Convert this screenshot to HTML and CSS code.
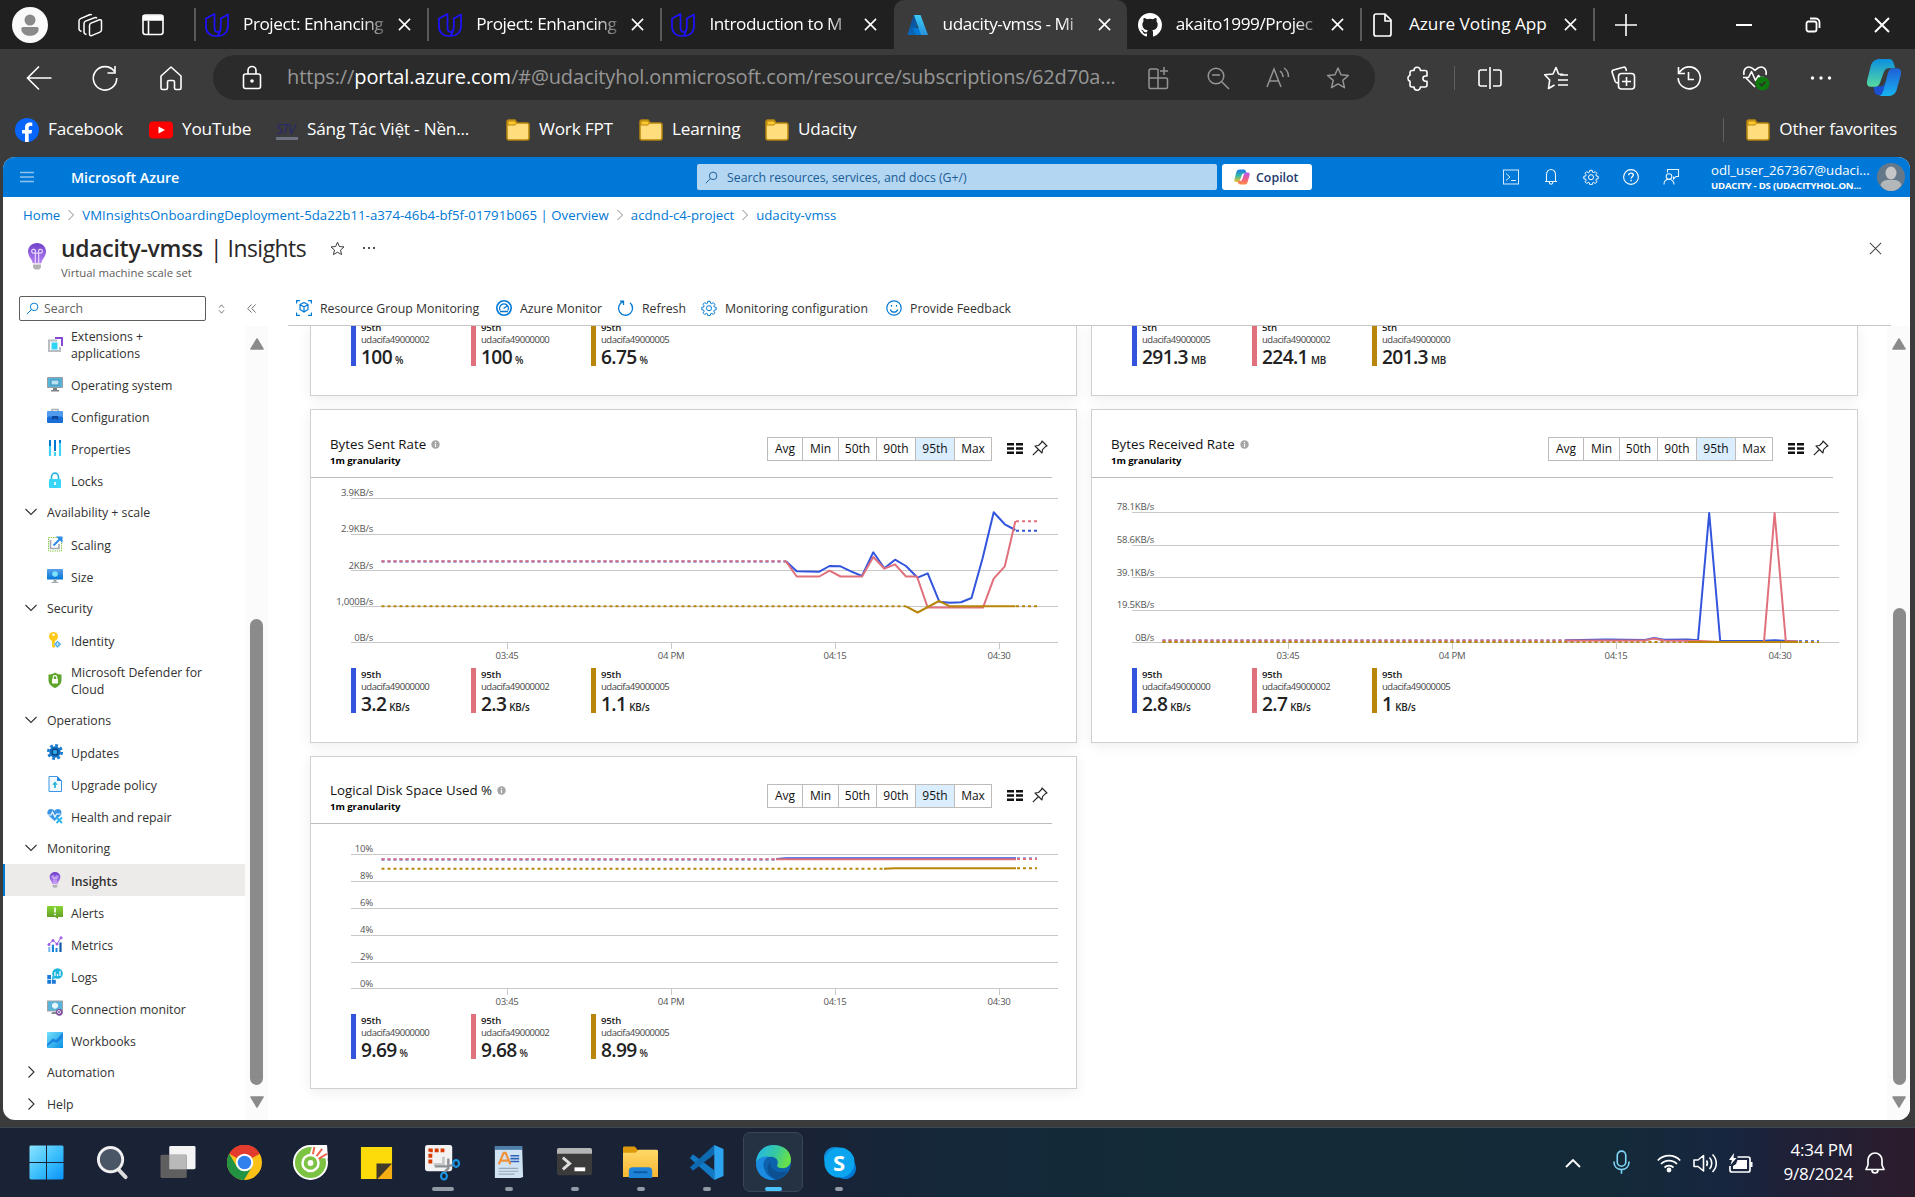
FILE: index.html
```html
<!DOCTYPE html>
<html lang="en">
<head>
<meta charset="utf-8">
<title>udacity-vmss - Microsoft Azure</title>
<link rel="stylesheet" href="styles.css">
</head>
<body>
<svg class="defs" width="0" height="0">
  <defs>
    <linearGradient id="g-az1" x1="0" y1="0" x2="0" y2="1"><stop offset="0" stop-color="#114a8b"/><stop offset="1" stop-color="#0669bc"/></linearGradient>
    <linearGradient id="g-az2" x1="0" y1="0" x2="0" y2="1"><stop offset="0" stop-color="#3ccbf4"/><stop offset="1" stop-color="#2892df"/></linearGradient>
    <linearGradient id="g-bulb" x1="0" y1="0" x2="0" y2="1"><stop offset="0" stop-color="#6f42c9"/><stop offset="1" stop-color="#b580f5"/></linearGradient>
    <linearGradient id="g-blue" x1="0" y1="0" x2="0" y2="1"><stop offset="0" stop-color="#5ea0ef"/><stop offset="1" stop-color="#0078d4"/></linearGradient>
    <linearGradient id="g-cyan" x1="0" y1="0" x2="1" y2="1"><stop offset="0" stop-color="#75e2fb"/><stop offset="1" stop-color="#0a90e6"/></linearGradient>
    <linearGradient id="g-green" x1="0" y1="0" x2="0" y2="1"><stop offset="0" stop-color="#86d633"/><stop offset="1" stop-color="#5e9624"/></linearGradient>
    <linearGradient id="g-win" x1="0" y1="0" x2="1" y2="1"><stop offset="0" stop-color="#8ce4ff"/><stop offset=".55" stop-color="#38bdfb"/><stop offset="1" stop-color="#0a93fb"/></linearGradient>
    <linearGradient id="g-cop1" x1="0" y1="0" x2="0" y2="1"><stop offset="0" stop-color="#0b8fe0"/><stop offset="1" stop-color="#57d9a0"/></linearGradient>
    <linearGradient id="g-cop2" x1="0" y1="0" x2="0" y2="1"><stop offset="0" stop-color="#1f5fd6"/><stop offset="1" stop-color="#16b3f2"/></linearGradient>
    <linearGradient id="g-cop3" x1="0" y1="0" x2="0" y2="1"><stop offset="0" stop-color="#1b78e8"/><stop offset=".5" stop-color="#35b8a5"/><stop offset="1" stop-color="#f5c02a"/></linearGradient>
    <linearGradient id="g-cop4" x1="0" y1="0" x2="0" y2="1"><stop offset="0" stop-color="#b35af0"/><stop offset=".5" stop-color="#ee5c8e"/><stop offset="1" stop-color="#ff8f3d"/></linearGradient>
    <linearGradient id="g-edge" x1="0" y1="0" x2="1" y2=".3"><stop offset="0" stop-color="#22b5ef"/><stop offset=".6" stop-color="#35c9a3"/><stop offset="1" stop-color="#66e04a"/></linearGradient>
    <linearGradient id="g-fold" x1="0" y1="0" x2="0" y2="1"><stop offset="0" stop-color="#ffd868"/><stop offset="1" stop-color="#f7b731"/></linearGradient>

    <symbol id="i-udacity" viewBox="0 0 24 24"><path d="M9.500 1 1 5.500V14c0 5.500 4.500 9 9.500 9h2C19 23 23 19 23 13V1.500L15.800 5.500V14c0 3-.800 5-3.300 5s-3-2-3-5ZM15.800 12c0 5-1 8-3.300 11" fill="none" stroke="#1f12ff" stroke-width="1.700" stroke-linejoin="round"/></symbol>
    <symbol id="i-x" viewBox="0 0 14 14"><path d="M1 1 13 13M13 1 1 13" fill="none" stroke="currentColor" stroke-width="1.700"/></symbol>
    <symbol id="i-folder" viewBox="0 0 24 22"><path d="M1 3a2 2 0 0 1 2-2h6l2 3h10a2 2 0 0 1 2 2v13a2 2 0 0 1-2 2H3a2 2 0 0 1-2-2Z" fill="#ffdc7c" stroke="#b8860b" stroke-width="1.500"/><path d="M2 2h7l1.500 2L9 6H2Z" fill="#fcc832" stroke="#b8860b" stroke-width="1"/></symbol>
    <symbol id="i-search" viewBox="0 0 16 16"><g fill="none" stroke="currentColor" stroke-width="1.200"><circle cx="10" cy="6" r="4.600"/><path d="M6.700 9.300 1 15"/></g></symbol>
    <symbol id="i-star" viewBox="0 0 24 24"><path d="m12 2 3 6.800 7.400.700-5.600 4.900 1.700 7.300L12 17.900l-6.500 3.800 1.700-7.300-5.600-4.900L9 8.800Z" fill="none" stroke="currentColor" stroke-width="1.500" stroke-linejoin="round"/></symbol>
    <symbol id="i-chevd" viewBox="0 0 12 12"><path d="m.500 3 5.500 5.500L11.500 3" fill="none" stroke="#323130" stroke-width="1.100"/></symbol>
    <symbol id="i-chevr" viewBox="0 0 12 12"><path d="m3.500.500 5.500 5.500-5.500 5.500" fill="none" stroke="#323130" stroke-width="1.100"/></symbol>
    <symbol id="i-crumb" viewBox="0 0 8 12"><path d="m1.500 1 5 5-5 5" fill="none" stroke="#8a8886" stroke-width="1"/></symbol>
    <symbol id="i-bulb" viewBox="0 0 16 24"><path d="M8 0c4.600 0 8 3.300 8 7.600 0 3-1.700 5.200-2.900 7-.700 1-1.100 2.200-1.300 3.400H4.200c-.200-1.200-.600-2.400-1.300-3.400C1.700 12.800 0 10.600 0 7.600 0 3.300 3.400 0 8 0Z" fill="url(#g-bulb)"/><path d="M6.500 18V8M9.500 18V8M6.500 8a1.700 1.700 0 1 0-1.700 1H11.200a1.700 1.700 0 1 0-1.700-1" fill="none" stroke="#e6d6fb" stroke-width="1.100"/><path d="M4.500 19h7v2.500l-1.500 2h-4l-1.500-2Z" fill="#b3b3b3"/></symbol>
    <symbol id="i-up" viewBox="0 0 14 12"><path d="M7 1 13 11H1Z" fill="#8b8b8b" stroke="#8b8b8b" stroke-width="1.500" stroke-linejoin="round"/></symbol>
    <symbol id="i-down" viewBox="0 0 14 12"><path d="M7 11 13 1H1Z" fill="#8b8b8b" stroke="#8b8b8b" stroke-width="1.500" stroke-linejoin="round"/></symbol>
    <symbol id="i-info" viewBox="0 0 10 10"><circle cx="5" cy="5" r="4.700" fill="#a6a6a6"/><path d="M5 4.300v3.400M5 2.200v1.200" stroke="#fff" stroke-width="1.200"/></symbol>
    <symbol id="i-cols" viewBox="0 0 16 11"><path d="M0 1.300h7M0 5.500h7M0 9.700h7M9 1.300h7M9 5.500h7M9 9.700h7" stroke="#111" stroke-width="2.500"/></symbol>
    <symbol id="i-pin" viewBox="0 0 16 16"><path d="m10 1 5 5-1.500.600-3 3L10 13 3 6l3.500-.500 3-3ZM6.500 9.500.800 15.200" fill="none" stroke="#222" stroke-width="1.100" stroke-linejoin="round"/></symbol>
    <symbol id="i-gear" viewBox="0 0 24 24"><g fill="none" stroke="currentColor"><path d="M10.200 2h3.600l.500 2.800 1.700.700 2.400-1.600 2.500 2.500-1.600 2.400.700 1.700 2.800.500v3.600l-2.800.500-.700 1.700 1.600 2.400-2.500 2.500-2.400-1.600-1.700.700-.500 2.800h-3.600l-.500-2.800-1.700-.700-2.400 1.600-2.500-2.500 1.600-2.400-.700-1.700L1.200 14.600V11l2.800-.500.700-1.700-1.600-2.400 2.500-2.500L8 5.500l1.700-.700Z" stroke-width="1.500" stroke-linejoin="round"/><circle cx="12" cy="12.300" r="3.800" stroke-width="1.500"/></g></symbol>
  </defs>
</svg>

<div class="browser">
  <div class="tabstrip">
    <div class="tabstrip-start">
      <svg class="profile" viewBox="0 0 36 36"><circle cx="18" cy="18" r="18" fill="#fafafa"/><circle cx="18" cy="13" r="5.500" fill="#8a8a8a"/><path d="M11 20h14a1.700 1.700 0 0 1 1.700 1.700c0 4.300-3.500 7-8.700 7s-8.700-2.700-8.700-7A1.700 1.700 0 0 1 11 20Z" fill="#8a8a8a"/></svg>
      <svg class="ic24" viewBox="0 0 24 24" fill="none" stroke="#fff" stroke-width="1.500" stroke-linejoin="round"><path d="M11.500 12.500c0-1.200.500-2 1.500-2.400l8.500-3.300c1.200-.400 2 .200 2 1.400v8.600c0 1-.500 1.900-1.500 2.300l-8.500 3.500c-1.200.400-2-.200-2-1.400ZM8.500 21.500C7 21.200 6 20.500 6 19v-8.500c0-1.200.500-2 1.500-2.400l9-3.300c1-.4 2-.1 2.300.6M3.500 18.500C1.800 18 1 17.200 1 15.800V8c0-1.200.5-2 1.500-2.400l9-3.800c1-.4 1.800-.2 2.200.3"/></svg>
      <svg class="ic24" viewBox="0 0 24 24" fill="none" stroke="#fff" stroke-width="1.600"><rect x="2" y="2" width="20" height="19.500" rx="2.500"/><path d="M2.500 3h19v4h-19Z" fill="#fff"/><path d="M7.500 8v13"/></svg>
    </div>
    <div class="tab"><svg class="fav"><use href="#i-udacity"/></svg><span class="tab-title">Project: Enhancing</span><svg class="tab-x"><use href="#i-x"/></svg></div>
    <div class="tab"><svg class="fav"><use href="#i-udacity"/></svg><span class="tab-title">Project: Enhancing</span><svg class="tab-x"><use href="#i-x"/></svg></div>
    <div class="tab"><svg class="fav"><use href="#i-udacity"/></svg><span class="tab-title">Introduction to M</span><svg class="tab-x"><use href="#i-x"/></svg></div>
    <div class="tab tab-active"><svg class="fav" viewBox="0 0 24 24"><path d="M8.500 2h7L9 22H2.500Z" fill="url(#g-az1)"/><path d="M8 15h9l3 7H10Z" fill="#0078d4"/><path d="M9 2h6.500L23 22h-7Z" fill="url(#g-az2)"/></svg><span class="tab-title">udacity-vmss - Mi</span><svg class="tab-x"><use href="#i-x"/></svg></div>
    <div class="tab no-line"><svg class="fav" viewBox="0 0 16 16"><path fill="#fff" d="M8 0C3.580 0 0 3.580 0 8c0 3.540 2.290 6.530 5.470 7.590.400.070.550-.170.550-.380 0-.190-.010-.820-.010-1.490-2.010.370-2.530-.490-2.690-.940-.090-.230-.480-.940-.820-1.130-.280-.150-.680-.520-.010-.530.630-.010 1.080.580 1.230.820.720 1.210 1.870.870 2.330.660.070-.520.280-.870.510-1.070-1.780-.200-3.640-.890-3.640-3.950 0-.870.310-1.590.820-2.150-.080-.200-.360-1.020.080-2.120 0 0 .670-.210 2.200.820a7.600 7.600 0 0 1 4 0c1.530-1.040 2.200-.820 2.200-.820.440 1.100.160 1.920.080 2.120.510.560.820 1.270.820 2.150 0 3.070-1.870 3.750-3.650 3.950.290.250.540.730.540 1.480 0 1.070-.010 1.930-.010 2.200 0 .210.150.460.550.380A8.010 8.010 0 0 0 16 8c0-4.420-3.580-8-8-8Z"/></svg><span class="tab-title">akaito1999/Projec</span><svg class="tab-x"><use href="#i-x"/></svg></div>
    <div class="tab"><svg class="fav" viewBox="0 0 24 24"><path d="M5 1h9l6 6v14a2 2 0 0 1-2 2H5a2 2 0 0 1-2-2V3a2 2 0 0 1 2-2ZM14 1v7h6" fill="none" stroke="#fff" stroke-width="1.700" stroke-linejoin="round"/></svg><span class="tab-title full">Azure Voting App</span><svg class="tab-x"><use href="#i-x"/></svg></div>
    <div class="newtab"><svg viewBox="0 0 22 22"><path d="M11 0v22M0 11h22" stroke="#fff" stroke-width="1.600"/></svg></div>
    <div class="winctl">
      <svg viewBox="0 0 16 16"><path d="M0 8h16" stroke="#fff" stroke-width="2"/></svg>
      <svg viewBox="0 0 16 16" fill="none" stroke="#fff" stroke-width="1.800"><rect x="1.500" y="4.500" width="10" height="10" rx="2"/><path d="M5 1.500h5.500a4 4 0 0 1 4 4V11"/></svg>
      <svg viewBox="0 0 16 16"><path d="m1 1 14 14M15 1 1 15" stroke="#fff" stroke-width="2"/></svg>
    </div>
  </div>

  <div class="addressrow">
    <div class="nav">
      <svg viewBox="0 0 26 26" fill="none" stroke="#fff" stroke-width="1.600"><path d="M25.500 13H1.500M13 1.500 1.500 13 13 24.500"/></svg>
      <svg viewBox="0 0 26 26" fill="none" stroke="#fff" stroke-width="1.600"><path d="M22.500 6.500A11.700 11.700 0 1 0 24.700 13M23 1v7h-7.500"/></svg>
      <svg viewBox="0 0 26 26" fill="none" stroke="#fff" stroke-width="1.600" stroke-linejoin="round"><path d="M3 11 13 2l10 9v12a1.500 1.500 0 0 1-1.500 1.500H18a1.500 1.500 0 0 1-1.500-1.500v-6a1.500 1.500 0 0 0-1.500-1.500h-4A1.500 1.500 0 0 0 9.500 17v6A1.500 1.500 0 0 1 8 24.500H4.500A1.500 1.500 0 0 1 3 23Z"/></svg>
    </div>
    <div class="omnibox">
      <svg class="lock" viewBox="0 0 24 24" fill="none" stroke="#fff" stroke-width="1.600"><rect x="3.500" y="8" width="17" height="14.500" rx="2"/><path d="M8 8V4.500a4 4 0 0 1 8 0V8"/><circle cx="12" cy="15" r="1" fill="#fff"/></svg>
      <span class="url">https://<b>portal.azure.com</b>/#@udacityhol.onmicrosoft.com/resource/subscriptions/62d70a...</span>
      <div class="omni-icons">
        <svg viewBox="0 0 24 24" fill="none" stroke="#949494" stroke-width="1.500"><path d="M11.500 3H4.500A1.500 1.500 0 0 0 3 4.500V21a1.500 1.500 0 0 0 1.500 1.500H20a1.500 1.500 0 0 0 1.500-1.500v-7.500a1.500 1.500 0 0 0-1.500-1.500H3M12 3v19.500M18 1v8M14 5h8"/></svg>
        <svg viewBox="0 0 24 24" fill="none" stroke="#949494" stroke-width="1.500"><circle cx="10" cy="10" r="7.800"/><path d="M6 9h8M15.700 15.700 23 23"/></svg>
        <svg viewBox="0 0 24 24" fill="none" stroke="#949494" stroke-width="1.500"><path d="M1 21 8 3l7 18M3.500 15h9M14 5c2 1.500 3 3.500 3 6M18 2c3 2 4.500 5 4.500 9"/></svg>
        <svg class="dim"><use href="#i-star"/></svg>
      </div>
    </div>
    <svg class="tool ext" viewBox="0 0 24 24" fill="none" stroke="#fff" stroke-width="1.600" stroke-linejoin="round"><path d="M8 4.500a3.200 3.200 0 0 1 6.400 0H19a2 2 0 0 1 2 2V10h-1.500a2.600 2.600 0 0 0 0 5.200H21V19a2 2 0 0 1-2 2h-4.600a3.200 3.200 0 0 1-6.400 0H6a2 2 0 0 1-2-2v-3.800a3.200 3.200 0 0 1 0-6V6.500a2 2 0 0 1 2-2Z"/></svg>
    <div class="vsep"></div>
    <div class="tools">
      <svg viewBox="0 0 24 24" fill="none" stroke="#fff" stroke-width="1.600"><path d="M12 1v22M9 4H3a2 2 0 0 0-2 2v12a2 2 0 0 0 2 2h6M15 4h6a2 2 0 0 1 2 2v12a2 2 0 0 1-2 2h-6"/></svg>
      <svg viewBox="0 0 24 24" fill="none" stroke="#fff" stroke-width="1.600" stroke-linejoin="round"><path d="m19.500 8.500-5-.500L12 1.500 9 8l-8.300.700 5 5.300-1.200 8.500 6-3.500M16 9h8M14 14h10M14 19h10"/></svg>
      <svg viewBox="0 0 24 24" fill="none" stroke="#fff" stroke-width="1.600"><rect x="7.500" y="7.500" width="16" height="15.500" rx="3"/><path d="M15.500 11v9M11 15.500h9M15.500 5 14.800 2.500a2 2 0 0 0-2.500-1.300L2.500 4A2 2 0 0 0 1.200 6.500l3 9c.500 1.200 1.500 1.500 3 1.500"/></svg>
      <svg viewBox="0 0 24 24" fill="none" stroke="#fff" stroke-width="1.600"><path d="M1.200 12A11 11 0 1 0 4 4.500L1.500 7.500M1.500 1v6.500H8M11.500 6v7.500H17"/></svg>
      <svg viewBox="0 0 28 26" fill="none" stroke="#fff" stroke-width="1.600" stroke-linejoin="round"><path d="M13 22 4 13M2 10c-1-4 1-8 5-8 3 0 4.500 2 6 3.500C14.500 4 16 2 19 2c4 0 6 4 5 8M1 12.500h5.500l3-6 4 9 3-5 1.500 2h4"/><circle cx="20.500" cy="18.500" r="7" fill="#0e7a0d" stroke="none"/><path d="m17.500 18.500 2.200 2.200 3.800-4" stroke="#2e2e2e"/></svg>
      <svg viewBox="0 0 24 24" fill="#fff"><circle cx="3.500" cy="12" r="1.700"/><circle cx="12" cy="12" r="1.700"/><circle cx="20.500" cy="12" r="1.700"/></svg>
      <svg class="copilot" viewBox="0 0 36 40"><path d="M12 38c-2.500 0-3.500-2-4-4.500L7 29h7c3 0 4-1.500 5-4l-1 13Z" fill="#1a4fd0"/><path d="M14 1h9.500c2.500 0 3.500 1.500 4.500 4.500l1.500 5H23c-3 0-4.500 2-5.500 5L14 25c-1 3-2.500 4.500-5.500 4.500H4.500C.8 29.500 0 26.500.8 22.500L4.500 8C5.700 3.500 9 1 14 1Z" fill="url(#g-cop1)"/><path d="M21.500 39H11.500c4 0 5-3 6-6.500l4.500-17c1-3.500 3-5 6-5h3.500c3.700 0 4.500 3 3.700 7L31 32.500c-1.200 4.500-4.500 6.500-9.500 6.500Z" fill="url(#g-cop2)"/></svg>
    </div>
  </div>

  <div class="bookmarks">
    <div class="bm bm1"><svg class="bmi" viewBox="0 0 24 24"><circle cx="12" cy="12" r="12" fill="#0866ff"/><path d="M10 24v-8.500H7V12h3V9.800C10 6 12 4.500 15 4.500c1.200 0 1.800.100 2.300.200V8H15.500c-1.300 0-1.800.600-1.800 2v2h3.400l-.600 3.500h-2.800V24Z" fill="#fff"/></svg><span>Facebook</span></div>
    <div class="bm bm2"><svg class="bmi" viewBox="0 0 24 24"><rect y="3.500" width="24" height="17" rx="4" fill="#f00"/><path d="m9.500 8.500 6.500 3.500-6.500 3.500Z" fill="#fff"/></svg><span>YouTube</span></div>
    <div class="bm bm3"><span class="stv"><i>STV</i></span><span>Sáng Tác Việt - Nền...</span></div>
    <div class="bm bm4"><svg class="bmi"><use href="#i-folder"/></svg><span>Work FPT</span></div>
    <div class="bm bm5"><svg class="bmi"><use href="#i-folder"/></svg><span>Learning</span></div>
    <div class="bm bm6"><svg class="bmi"><use href="#i-folder"/></svg><span>Udacity</span></div>
    <div class="bm other"><svg class="bmi"><use href="#i-folder"/></svg><span>Other favorites</span></div>
  </div>

  <div class="page">
    <header class="azbar">
      <svg class="burger" viewBox="0 0 14 12"><path d="M0 1.500h14M0 6h14M0 10.500h14" stroke="#8fc3ee" stroke-width="1.500"/></svg>
      <span class="brand">Microsoft Azure</span>
      <div class="azsearch"><svg><use href="#i-search"/></svg><span>Search resources, services, and docs (G+/)</span></div>
      <div class="azcopilot"><svg viewBox="0 0 36 36"><path d="M13 1h9c3 0 4 2 5 5l1 4h-6c-3 0-4 2-5 5l-3 9c-1 3-3 5-6 5H5c-4 0-5-3-4-6l4-15c1-5 4-7 8-7Z" fill="url(#g-cop3)"/><path d="M23 35h-9c-3 0-4-2-5-5l-1-3h6c3 0 4-2 5-5l3-9c1-3 3-5 6-5h3c4 0 5 3 4 6l-4 14c-1 5-4 7-8 7Z" fill="url(#g-cop4)"/></svg><span>Copilot</span></div>
      <div class="azicons">
        <svg viewBox="0 0 16 16" fill="none" stroke="#d8ebfb"><rect x=".5" y="1" width="15" height="14"/><path d="m3 4.500 4 3.500-4 3.500M8 11.500h5"/></svg>
        <svg viewBox="0 0 16 16" fill="none" stroke="#e6f2fc" stroke-width="1.100"><path d="M2 12.500h12M3.500 12.500V5.500a4.500 5 0 0 1 9 0v7M6.300 13a1.700 2.200 0 0 0 3.400 0"/></svg>
        <svg class="w"><use href="#i-gear"/></svg>
        <svg viewBox="0 0 16 16" fill="none" stroke="#fff" stroke-width="1.100"><circle cx="8" cy="8" r="7.400"/><path d="M5.700 6.200c0-1.300 1-2.100 2.300-2.100s2.300.800 2.300 2c0 1.500-2.200 1.700-2.200 3.400M8.100 10.700v1.500" stroke-width="1.400"/></svg>
        <svg viewBox="0 0 16 16" fill="none" stroke="#e6f2fc" stroke-width="1.100"><circle cx="6" cy="7.500" r="2.800"/><path d="M1 15.500c0-3 2-5.200 5-5.200s5 2.200 5 5.200M4.500 3.500v-3h11v7h-2.500L10.500 10V7.500"/></svg>
      </div>
      <div class="user"><div class="u1">odl_user_267367@udaci...</div><div class="u2">UDACITY - DS (UDACITYHOL.ON...</div></div>
      <svg class="avatar" viewBox="0 0 28 28"><circle cx="14" cy="14" r="14" fill="#65788a"/><ellipse cx="14" cy="10" rx="5.500" ry="6.500" fill="#c4c6c8"/><path d="M3.500 22c1-4 5-5 7-5h7c3 0 6 1.500 7 5-2.500 4-6 6-10.500 6S6 26 3.500 22Z" fill="#b4b7ba"/></svg>
    </header>

    <nav class="crumbs"><span class="c1">Home</span><svg><use href="#i-crumb"/></svg><span class="c2">VMInsightsOnboardingDeployment-5da22b11-a374-46b4-bf5f-01791b065 | Overview</span><svg><use href="#i-crumb"/></svg><span class="c3">acdnd-c4-project</span><svg><use href="#i-crumb"/></svg><span class="c4">udacity-vmss</span></nav>

    <div class="titlebar">
      <svg class="bulb"><use href="#i-bulb"/></svg>
      <div class="titles">
        <div class="h"><b>udacity-vmss</b><span>| Insights</span><svg class="hstar"><use href="#i-star"/></svg><svg class="hdots" viewBox="0 0 14 4"><circle cx="2" cy="2" r=".9"/><circle cx="7" cy="2" r=".9"/><circle cx="12" cy="2" r=".9"/></svg></div>
        <div class="sub">Virtual machine scale set</div>
      </div>
      <svg class="close" viewBox="0 0 14 14"><path d="m1 1 12 12M13 1 1 13" stroke="#484644" stroke-width="1.100"/></svg>
    </div>

    <div class="body">
      <aside class="side">
        <div class="side-head">
          <div class="ssearch"><svg><use href="#i-search"/></svg><span>Search</span></div>
          <svg class="updn" viewBox="0 0 8 12"><path d="M1 4.500 4 1l3 3.500M1 7.500 4 11l3-3.500" fill="none" stroke="#605e5c"/></svg>
          <svg class="dbl" viewBox="0 0 10 10"><path d="M5 .5.800 5 5 9.500M9.500.5 5.300 5l4.200 4.500" fill="none" stroke="#605e5c"/></svg>
        </div>
        <div class="side-body">
          <ul class="menu">
            <li class="two"><svg viewBox="0 0 16 16"><path d="M1 3.500h9v2H3v8.500h9V11h2v5H1Z" fill="#b9bcc0"/><rect x="4.500" y="6.500" width="6" height="7" fill="#32d4f5"/><path d="M8 1h8v9h-2V3H8Z" fill="#8549d6"/></svg><span>Extensions +<br>applications</span></li>
            <li><svg viewBox="0 0 16 16"><rect y="1" width="16" height="11" rx="1" fill="#9a9da0"/><rect x="1" y="2" width="14" height="9" fill="#59b4d9"/><rect x="4" y="4" width="8" height="5" fill="#b9e3f3" stroke="#3a8fb5"/><path d="M6 12h4v2h2v1.500H4V14h2Z" fill="#7f8386"/></svg><span>Operating system</span></li>
            <li><svg viewBox="0 0 16 16"><path d="M5 3.500V1.500h6v2" fill="none" stroke="#a8adb3" stroke-width="1.500"/><rect y="3" width="16" height="6" rx="1" fill="#4f9bee"/><rect y="8.500" width="16" height="6.500" rx="1" fill="#1a6fd6"/><path d="M5 8h6v4l-3-1.500L5 12Z" fill="#0c479c"/></svg><span>Configuration</span></li>
            <li><svg viewBox="0 0 16 16"><path d="M3 0v9M13 0v4M8 0v11" stroke="#0078d4" stroke-width="2"/><path d="M3 6v10M8 12v4M13 3v13" stroke="#45d3f5" stroke-width="2.200"/></svg><span>Properties</span></li>
            <li><svg viewBox="0 0 16 16"><path d="M4.500 8V5a3.500 3.800 0 0 1 7 0v3" fill="none" stroke="#2fb4e0" stroke-width="1.700"/><rect x="2" y="7" width="12" height="9" rx="1" fill="#3ad6f7"/><path d="M8 10v3" stroke="#fff" stroke-width="1.700"/></svg><span>Locks</span></li>
            <li class="grp"><svg><use href="#i-chevd"/></svg><span>Availability + scale</span></li>
            <li><svg viewBox="0 0 16 16"><rect x="1.500" y="1.500" width="13" height="13.500" fill="none" stroke="#7fc53a" stroke-dasharray="1.300 1"/><path d="M3.500 4v8.500H12V8" fill="none" stroke="#a3a8ad" stroke-width="1.600"/><path d="m6.500 9.500 6-6" stroke="#2b8ce6" stroke-width="2"/><path d="M9 .5h6.500V7Z" fill="#2b8ce6"/></svg><span>Scaling</span></li>
            <li><svg viewBox="0 0 16 16"><rect y="1" width="16" height="10.500" rx=".5" fill="url(#g-blue)"/><circle cx="8" cy="6" r="2.800" fill="#7be4fb"/><path d="M6.500 11.500h3v2.500h2v1h-7v-1h2Z" fill="#a3a8ad"/></svg><span>Size</span></li>
            <li class="grp"><svg><use href="#i-chevd"/></svg><span>Security</span></li>
            <li><svg viewBox="0 0 16 16"><circle cx="6.500" cy="4.500" r="4.500" fill="#ffc91a"/><circle cx="6.500" cy="2.800" r="1.200" fill="#fff"/><path d="M5 8h3v7l-1.500 1L5 14.500Z" fill="#ffc91a"/><path d="m10.500 8.500 4 3.700-4 3.700-4-3.700Z" fill="#4aa8e0" stroke="#fff" stroke-width=".5"/><path d="M8.500 12.200h4M10.500 10v4" stroke="#d5eefc" stroke-width=".8"/></svg><span>Identity</span></li>
            <li class="two"><svg viewBox="0 0 16 16"><path d="M8 .5c2 1.500 4 2 6.500 2V8c0 4-3 6.500-6.500 8C4.500 14.500 1.500 12 1.500 8V2.500C4 2.500 6 2 8 .5Z" fill="#5fa52a"/><rect x="5" y="7" width="6" height="4.500" fill="#fff"/><path d="M6.200 7V5.500a1.800 1.800 0 0 1 3.600 0V7" fill="none" stroke="#fff" stroke-width="1.200"/></svg><span>Microsoft Defender for<br>Cloud</span></li>
            <li class="grp"><svg><use href="#i-chevd"/></svg><span>Operations</span></li>
            <li><svg viewBox="0 0 16 16"><circle cx="8" cy="8" r="6.700" fill="none" stroke="#1279cf" stroke-width="2.600" stroke-dasharray="2.800 2.460"/><circle cx="8" cy="8" r="5.700" fill="#0f6fc2"/><circle cx="8" cy="8" r="3.500" fill="#0a3f78"/><circle cx="8" cy="8" r="2.300" fill="#2fa8e8"/></svg><span>Updates</span></li>
            <li><svg viewBox="0 0 16 16"><path d="M2 .5h8L14.500 5v10.500H2Z" fill="#f2faff" stroke="#3b96e8"/><path d="M10 0v5h5Z" fill="#2a85dc"/><path d="M8 12V8" stroke="#1fb0d8" stroke-width="1.600"/><path d="M5.300 8.700 8 5.500l2.700 3.200Z" fill="#1fb0d8"/></svg><span>Upgrade policy</span></li>
            <li><svg viewBox="0 0 16 16"><path d="M7.500 13 1.500 7.500C-1 4.500 1 .8 4 1c1.500 0 2.800.8 3.500 2C8.200 1.800 9.500 1 11 1c3 0 4.800 3.500 2.500 6.500Z" fill="#3a95e4"/><path d="M1 7h3l1.500-3L8 9l1.500-3h4" fill="none" stroke="#fff" stroke-width="1.100"/><path d="m9 9 6 6M15 9.500 9.500 15" stroke="#29b3ea" stroke-width="1.800"/></svg><span>Health and repair</span></li>
            <li class="grp"><svg><use href="#i-chevd"/></svg><span>Monitoring</span></li>
            <li class="sel"><svg><use href="#i-bulb"/></svg><span>Insights</span></li>
            <li><svg viewBox="0 0 16 16"><path d="M.5 2h15a.5.500 0 0 1 .5.500V13H11v2l-3-2H0V2.500A.5.500 0 0 1 .5 2Z" fill="url(#g-green)"/><path d="M8 3.500v5M8 9.700v1.600" stroke="#fff" stroke-width="1.700"/></svg><span>Alerts</span></li>
            <li><svg viewBox="0 0 16 16"><path d="M2.300 16v-5M5.800 16V8.500" stroke="#74b4f0" stroke-width="2"/><path d="M6 16V9M9.500 16v-4" stroke="#1683dc" stroke-width="2"/><path d="M13.500 16V6.500" stroke="#0c5aa8" stroke-width="2.200"/><path d="m2 8 4-3.500L10 8l4-6.500" fill="none" stroke="#a15ee8"/><g fill="#a15ee8"><circle cx="2" cy="8.500" r="1.500"/><circle cx="6" cy="4.500" r="1.500"/><circle cx="10" cy="8" r="1.500"/><circle cx="14" cy="1.700" r="1.500"/></g></svg><span>Metrics</span></li>
            <li><svg viewBox="0 0 16 16"><circle cx="10.500" cy="5.500" r="5.300" fill="#1fb6dd"/><path d="M5 8v4l3-2Z" fill="#1fb6dd"/><path d="M8 4v4M10.500 6v2M13 3v5" stroke="#fff" stroke-width="1.200"/><path d="M.3 7h3.700v4H.3ZM.3 11.800h3.700v4H.3ZM4.800 11.800h4v4h-4Z" fill="#1a78d6"/></svg><span>Logs</span></li>
            <li><svg viewBox="0 0 16 16"><rect y=".5" width="16" height="11" fill="#a0a4a8"/><rect x="1" y="1.500" width="14" height="9" fill="#59b4d9"/><path d="m8 2.500 3 1.500v3L8 9 5 7V4Z" fill="#e6f6fc"/><path d="M5.500 12h4v2H4Z" fill="#85898c"/><circle cx="12.300" cy="12.300" r="3.400" fill="#7b4a9e"/><circle cx="12" cy="12" r="1.500" fill="none" stroke="#fff" stroke-width=".8"/></svg><span>Connection monitor</span></li>
            <li><svg viewBox="0 0 16 16"><rect width="16" height="16" rx=".5" fill="url(#g-cyan)"/><path d="M0 12 6 6.500l3 1.500 7-7.500V6L9.500 11 6.500 9.500 0 14.500Z" fill="#1a84df"/></svg><span>Workbooks</span></li>
            <li class="grp"><svg><use href="#i-chevr"/></svg><span>Automation</span></li>
            <li class="grp"><svg><use href="#i-chevr"/></svg><span>Help</span></li>
          </ul>
          <div class="scroll"><svg><use href="#i-up"/></svg><div class="gap1"></div><div class="thumb"></div><svg><use href="#i-down"/></svg></div>
        </div>
      </aside>

      <main class="main">
        <div class="cmds">
          <svg viewBox="0 0 16 16" fill="none" stroke="#0078d4" stroke-width="1.200"><path d="M.6 3.500V.6H4M12 .6h3.400v2.900M.6 12.500v2.900H4M12 15.400h3.400v-2.900M8 2.500 12 4.500v5L8 12 4 9.500v-5ZM4 4.500 8 7l4-2.500M8 7v5"/></svg><span class="k1">Resource Group Monitoring</span>
          <svg viewBox="0 0 16 16" fill="none" stroke="#0078d4" stroke-width="1.600"><circle cx="8" cy="8" r="7.200"/><path d="M4 10.500a4.500 4.500 0 1 1 8 0M4 11.500h8M7.500 8.500 11 6" stroke-width="1.300"/></svg><span class="k2">Azure Monitor</span>
          <svg viewBox="0 0 16 16" fill="none" stroke="#0078d4" stroke-width="1.300"><path d="M12 2.800A7 7 0 1 1 5 1.700M2 1.200h3.500V5"/></svg><span class="k3">Refresh</span>
          <svg class="bl"><use href="#i-gear"/></svg><span class="k4">Monitoring configuration</span>
          <svg viewBox="0 0 16 16" fill="none" stroke="#0078d4" stroke-width="1.200"><circle cx="8" cy="8" r="7.200"/><path d="M4.300 9.500a3.900 3.900 0 0 0 7.400 0M5.500 5v1.700M10.500 5v1.700"/></svg><span class="k5">Provide Feedback</span>
        </div>
        <div class="content">
          <div class="grid">
            <section class="card short">
              <div class="legend"><div class="lg b"><b>95th</b><i>udacifa49000002</i><p>100<small>%</small></p></div><div class="lg r"><b>95th</b><i>udacifa49000000</i><p>100<small>%</small></p></div><div class="lg y"><b>95th</b><i>udacifa49000005</i><p>6.75<small>%</small></p></div></div>
            </section>
            <section class="card short">
              <div class="legend"><div class="lg b"><b>5th</b><i>udacifa49000005</i><p>291.3<small>MB</small></p></div><div class="lg r"><b>5th</b><i>udacifa49000002</i><p>224.1<small>MB</small></p></div><div class="lg y"><b>5th</b><i>udacifa49000000</i><p>201.3<small>MB</small></p></div></div>
            </section>

            <section class="card">
              <div class="card-head">
                <div class="ct"><h3>Bytes Sent Rate<svg><use href="#i-info"/></svg></h3><h4>1m granularity</h4></div>
                <div class="pills"><span>Avg</span><span>Min</span><span>50th</span><span>90th</span><span class="on">95th</span><span>Max</span></div>
                <svg class="cols"><use href="#i-cols"/></svg><svg class="pin"><use href="#i-pin"/></svg>
              </div>
              <svg class="chart" viewBox="311 478 765 190">
                <path class="gl" d="M351 498.500H1058M351 534.500H1058M351 570.500H1058M351 606.500H1058M351 642.500H1058M507.500 643v6M671.500 643v6M835.500 643v6M999.500 643v6"/>
                <g class="yl"><text x="373" y="496">3.9KB/s</text><text x="373" y="532">2.9KB/s</text><text x="373" y="569">2KB/s</text><text x="373" y="605">1,000B/s</text><text x="373" y="641">0B/s</text></g>
                <g class="xl"><text x="507" y="659">03:45</text><text x="671" y="659">04 PM</text><text x="835" y="659">04:15</text><text x="999" y="659">04:30</text></g>
                <path class="s b d" d="M381.500 561.500H786"/><path class="s r d" d="M381.500 561.200H786"/><path class="s y d" d="M381.500 606.300H906"/>
                <path class="s b" d="M786 561.300 796.700 571.300 819.400 571.700 829.500 566 840.500 566.300 851 571.300 862 576 873.300 552.300 884.400 568.300 895 559.700 906 566 917.600 577.700 927.700 573.300 939.300 601.700 950 602.700 961 602.300 971.500 598 982.600 558.300 993.700 512.300 1004.800 524.300 1015.400 530"/>
                <path class="s r" d="M786 561.300 796.700 576.500H819.400L829.500 570.700 840.500 576.500H862L873.300 557 884.400 568.700 895 564.300 906 576.500H917L927.700 607.600H983L993.700 578.700 1004.800 566.300 1015.400 521"/>
                <path class="s y" d="M906 606.300 917.600 612.500 939 601 950 606.300H1015.400"/>
                <path class="s b d" d="M1016 530.700H1037"/><path class="s r d" d="M1016 521.300H1037"/><path class="s y d" d="M1016 606.300H1037"/>
              </svg>
              <div class="legend"><div class="lg b"><b>95th</b><i>udacifa49000000</i><p>3.2<small>KB/s</small></p></div><div class="lg r"><b>95th</b><i>udacifa49000002</i><p>2.3<small>KB/s</small></p></div><div class="lg y"><b>95th</b><i>udacifa49000005</i><p>1.1<small>KB/s</small></p></div></div>
            </section>

            <section class="card">
              <div class="card-head">
                <div class="ct"><h3>Bytes Received Rate<svg><use href="#i-info"/></svg></h3><h4>1m granularity</h4></div>
                <div class="pills"><span>Avg</span><span>Min</span><span>50th</span><span>90th</span><span class="on">95th</span><span>Max</span></div>
                <svg class="cols"><use href="#i-cols"/></svg><svg class="pin"><use href="#i-pin"/></svg>
              </div>
              <svg class="chart" viewBox="1092 478 765 190">
                <path class="gl" d="M1132 512.500H1839M1132 545.500H1839M1132 577.500H1839M1132 610.500H1839M1132 642.500H1839M1288.500 643v6M1452.500 643v6M1616.500 643v6M1780.500 643v6"/>
                <g class="yl"><text x="1154" y="510">78.1KB/s</text><text x="1154" y="543">58.6KB/s</text><text x="1154" y="576">39.1KB/s</text><text x="1154" y="608">19.5KB/s</text><text x="1154" y="641">0B/s</text></g>
                <g class="xl"><text x="1288" y="659">03:45</text><text x="1452" y="659">04 PM</text><text x="1616" y="659">04:15</text><text x="1780" y="659">04:30</text></g>
                <path class="s b d" d="M1162.500 640.500H1566"/><path class="s r d" d="M1162.500 640.500H1566"/><path class="s y d" d="M1162.500 642H1688"/>
                <path class="s b" d="M1566 640.300 1607 639.600 1645 640 1654 638 1664 639.800 1688 639.500 1698 640.300 1709.200 513 1720.200 641 1764 640.800 1775 640.300 1798 641.500"/>
                <path class="s r" d="M1566 640.500H1645L1654 638.500 1664 640.500 1700 641 1720 642H1764L1774.600 513 1785.800 641 1798 641.500"/>
                <path class="s y" d="M1688 642H1798"/><path class="s b d" d="M1799 641.300H1819"/><path class="s y d" d="M1799 642H1819"/>
              </svg>
              <div class="legend"><div class="lg b"><b>95th</b><i>udacifa49000000</i><p>2.8<small>KB/s</small></p></div><div class="lg r"><b>95th</b><i>udacifa49000002</i><p>2.7<small>KB/s</small></p></div><div class="lg y"><b>95th</b><i>udacifa49000005</i><p>1<small>KB/s</small></p></div></div>
            </section>

            <section class="card last">
              <div class="card-head">
                <div class="ct"><h3>Logical Disk Space Used %<svg><use href="#i-info"/></svg></h3><h4>1m granularity</h4></div>
                <div class="pills"><span>Avg</span><span>Min</span><span>50th</span><span>90th</span><span class="on">95th</span><span>Max</span></div>
                <svg class="cols"><use href="#i-cols"/></svg><svg class="pin"><use href="#i-pin"/></svg>
              </div>
              <svg class="chart" viewBox="311 824 765 190">
                <path class="gl" d="M351 854.500H1058M351 881.500H1058M351 908.500H1058M351 935.500H1058M351 962.500H1058M351 988.500H1058M507.500 989v6M671.500 989v6M835.500 989v6M999.500 989v6"/>
                <g class="yl"><text x="373" y="852">10%</text><text x="373" y="879">8%</text><text x="373" y="906">6%</text><text x="373" y="933">4%</text><text x="373" y="960">2%</text><text x="373" y="987">0%</text></g>
                <g class="xl"><text x="507" y="1005">03:45</text><text x="671" y="1005">04 PM</text><text x="835" y="1005">04:15</text><text x="999" y="1005">04:30</text></g>
                <path class="s b d" d="M381.500 859.400H776"/><path class="s r d" d="M381.500 859.200H776"/><path class="s y d" d="M381.500 868.800H886"/>
                <path class="s b" d="M776 859 786 858.200H1016"/><path class="s r" d="M776 859.300H1016"/><path class="s y" d="M884 868.800 895 868.200H1016"/>
                <path class="s b d" d="M1017 858.400H1037"/><path class="s r d" d="M1017 859H1037"/><path class="s y d" d="M1017 868.200H1037"/>
              </svg>
              <div class="legend"><div class="lg b"><b>95th</b><i>udacifa49000000</i><p>9.69<small>%</small></p></div><div class="lg r"><b>95th</b><i>udacifa49000002</i><p>9.68<small>%</small></p></div><div class="lg y"><b>95th</b><i>udacifa49000005</i><p>8.99<small>%</small></p></div></div>
            </section>
          </div>
          <div class="scroll right"><svg><use href="#i-up"/></svg><div class="gap2"></div><div class="thumb"></div><svg><use href="#i-down"/></svg></div>
        </div>
      </main>
    </div>
  </div>
</div>

<footer class="taskbar">
  <div class="apps">
    <div class="app"><svg viewBox="0 0 36 36"><path d="M.5 2a1.500 1.500 0 0 1 1.500-1.500h15.500v17H.5ZM18.500.5H34A1.500 1.500 0 0 1 35.500 2v15.500h-17ZM.5 18.500h17v17H2A1.500 1.500 0 0 1 .5 34ZM18.500 18.500h17V34a1.500 1.500 0 0 1-1.500 1.500H18.500Z" fill="url(#g-win)"/></svg></div>
    <div class="app"><svg viewBox="0 0 36 36"><path d="m23 24 8.500 9" stroke="#dcdcdc" stroke-width="4" stroke-linecap="round"/><circle cx="16" cy="15" r="12.500" fill="#4a5565" stroke="#f0f0f0" stroke-width="3"/></svg></div>
    <div class="app"><svg viewBox="0 0 36 36"><rect x="9" y="1" width="27" height="24" rx="1.500" fill="#f4f4f4"/><rect y="10" width="27" height="24" rx="1.500" fill="#5f5f5f"/><rect x="9" y="10" width="18" height="15" fill="#b9b9b9"/></svg></div>
    <div class="app"><svg viewBox="0 0 36 36"><circle cx="18" cy="18" r="18" fill="#fbc116"/><path d="M18 18 2.400 9A18 18 0 0 1 33.600 9Z" fill="#e33b2e"/><path d="M2.400 9A18 18 0 0 0 17.500 36l8-13.500L10 22Z" fill="#229342"/><path d="M2.400 9 18 9h15.600A18 18 0 0 0 2.400 9Z" fill="#e33b2e"/><circle cx="18" cy="18" r="9" fill="#fff"/><circle cx="18" cy="18" r="7" fill="#3080ee"/></svg></div>
    <div class="app"><svg viewBox="0 0 36 36"><circle cx="18" cy="18" r="17" fill="#7cc243" stroke="#fff" stroke-width="2"/><path d="M17 10 20 0h15l1 14-13-1Z" fill="#fff"/><path d="m20 12 2-10M23 13l7-9M25 15l10-6" stroke="#f0624a" stroke-width="2"/><circle cx="18" cy="18.500" r="9.500" fill="#fff"/><circle cx="18" cy="18.500" r="7" fill="#7cc243"/><circle cx="18" cy="18.500" r="3" fill="#fff"/></svg></div>
    <div class="app"><svg viewBox="0 0 36 36"><path d="M2 2h32v17L21 35H2Z" fill="#fddb0a"/><path d="M18 35V19h16L21 35Z" fill="#3f3a2a"/><path d="M34 19v16H19Z" fill="#f5ae12"/></svg></div>
    <div class="app run wide"><svg viewBox="0 0 36 36"><rect width="28" height="27" rx="2.500" fill="#f2f2f2"/><path d="M5.500 19V5.500H21" fill="none" stroke="#d83b01" stroke-width="4" stroke-dasharray="4 2"/><path d="M9 20h10v-8" fill="none" stroke="#c9c9c9" stroke-width="3"/><path d="M24 14v10l-5 5M10 22h14l6-2" fill="none" stroke="#8e9296" stroke-width="2.500"/><ellipse cx="32" cy="19" rx="3" ry="3.500" fill="none" stroke="#1c94e0" stroke-width="2.200"/><ellipse cx="19.500" cy="32" rx="3" ry="3.500" fill="none" stroke="#1c94e0" stroke-width="2.200"/></svg></div>
    <div class="app run"><svg viewBox="0 0 36 36"><path d="M4 1h28l1 32-3 1H4Z" fill="#cfe3f5"/><path d="M4 1h28v4H4Z" fill="#4f7fa8"/><path d="M8 20 13 8h2l5 12M10 16h8" fill="none" stroke="#f0913a" stroke-width="2.300"/><path d="M20 11h9M20 14h9M20 17h9" stroke="#2e62b5" stroke-width="1.600"/><path d="M8 24h20M8 27h20M8 30h16" stroke="#9aa9b8" stroke-width="1.200"/></svg></div>
    <div class="app run"><svg viewBox="0 0 36 36"><rect y="3" width="36" height="28" rx="2" fill="#3b3b3b"/><path d="M0 5a2 2 0 0 1 2-2h32a2 2 0 0 1 2 2v4H0Z" fill="#b5b5b5"/><path d="m6 13 7 6-7 6" fill="none" stroke="#dcdcdc" stroke-width="3"/><rect x="18" y="23" width="11" height="4" fill="#fff"/></svg></div>
    <div class="app run"><svg viewBox="0 0 36 36"><path d="M0 3a1.500 1.500 0 0 1 1.500-1.500H12L16 6v5H0Z" fill="#dc9a0c"/><path d="M0 8h13l3-3h18.500A1.500 1.500 0 0 1 36 6.500V33H0Z" fill="url(#g-fold)"/><path d="M6 34v-7a4 4 0 0 1 4-4h16a4 4 0 0 1 4 4v7Z" fill="#1c83d6"/><path d="M11 28h14" stroke="#0d5aa3" stroke-width="2"/></svg></div>
    <div class="app run"><svg viewBox="0 0 36 36"><path d="M26 0v36L1 13.500 4 9.500 26 26Z" fill="#1279c4"/><path d="M26 0 1 23l3 3.500L27 9Z" fill="#0e6ab0"/><path d="M26 0 35.500 4v28L26 36Z" fill="#2ba3ee"/></svg></div>
    <div class="app run cur"><svg viewBox="0 0 36 36"><circle cx="18" cy="18" r="18" fill="#0c62ad"/><path d="M0 18C1 6 9 0 18 0c11 0 18 7 18 15 0 6-4 9-9 9-4 0-6-1.500-5-4 1.500-4-1-8-7-8C8 12 2 16 0 18Z" fill="url(#g-edge)"/><path d="M0 19c1-5 7-8 13-7-5 2-7 8-4 14 2 5 7 9 12 9.500C9 38 0 30 0 19Z" fill="#1a8be0"/><path d="M15 17c-2 8 6 13 17 10-3 5-7 8-11 8.500-9-3-12-13-6-18.500Z" fill="#0d4f93"/></svg></div>
    <div class="app run"><svg viewBox="0 0 36 36"><circle cx="13" cy="13" r="11" fill="#1289d8"/><circle cx="24" cy="24" r="11" fill="#0078d4"/><circle cx="18" cy="18" r="15.500" fill="#0aa5ee"/></svg><em>S</em></div>
  </div>
  <div class="tray">
    <svg class="t1" viewBox="0 0 16 10"><path d="m1 9 7-7 7 7" fill="none" stroke="#fff" stroke-width="1.900"/></svg>
    <svg class="t2" viewBox="0 0 18 26" fill="none" stroke="#7fd6fb" stroke-width="1.700"><rect x="4.500" y="1" width="9" height="16" rx="4.500"/><path d="M1 12c0 5.500 3.500 8.500 8 8.500s8-3 8-8.500M9 20.500V25"/></svg>
    <svg class="t3" viewBox="0 0 24 20" fill="none" stroke="#fff" stroke-width="1.800"><path d="M.8 7.500a15.500 15.500 0 0 1 22.400 0M4 11a11 11 0 0 1 16 0M7.500 14.500a6.500 6.500 0 0 1 9 0"/><circle cx="12" cy="17" r="1.500" fill="#fff"/></svg>
    <svg class="t4" viewBox="0 0 24 20" fill="none" stroke="#fff" stroke-width="1.600" stroke-linejoin="round"><path d="M1 7v6.500h4L10.500 18V2.500L5 7ZM13.500 7.500c1 1.500 1 4 0 5.500M16.500 4.500c3 3 3 8.500 0 11.500M19.500 1.500c5 5 5 12.500 0 17.500"/></svg>
    <svg class="t5" viewBox="0 0 24 20" fill="none" stroke="#fff" stroke-width="1.700"><path d="M8.500 4H19a2 2 0 0 1 2 2v11a2 2 0 0 1-2 2H3a2 2 0 0 1-2-2v-4"/><path d="M8.500 7H18v9H4v-3l3-2Z" fill="#fff" stroke="none"/><path d="M21 9h2.500v5H21Z" fill="#fff" stroke="none"/><path d="M5 0 0 7h3l-1.500 5L7.500 5h-3Z" fill="#fff" stroke="none"/></svg>
    <div class="clock">4:34 PM<br>9/8/2024</div>
    <svg class="t6" viewBox="0 0 20 24" fill="none" stroke="#fff" stroke-width="1.700" stroke-linejoin="round"><path d="M3 14V9a7 7 0 0 1 14 0v5l2 4.500H1ZM7 19a3 3 0 0 0 6 0"/></svg>
  </div>
</footer>
</body>
</html>
```

FILE: styles.css
```css
* { box-sizing: border-box; }
html, body { margin: 0; height: 100%; overflow: hidden; }
body {
  width: 1915px; height: 1197px;
  display: flex; flex-direction: column;
  background: #3b3b3b;
  font-family: "Open Sans", "Noto Sans", sans-serif;
  font-size: 12.300px; color: #323130;
}
.defs { position: absolute; }
svg { flex: none; display: block; overflow: visible; }
span, div { white-space: nowrap; }
.browser { height: 1127px; display: flex; flex-direction: column; }

/* tab strip */
.tabstrip { display: flex; height: 49px; background: #202020; color: #fff; align-items: stretch; }
.tabstrip-start { width: 194px; display: flex; align-items: center; padding-left: 12px; }
.profile { width: 36px; height: 36px; margin-right: 30px; }
.ic24 { width: 24px; height: 24px; margin-right: 39px; }
.tab { width: 233.200px; display: flex; align-items: center; padding-left: 9px; border-left: 2px solid transparent; border-image: linear-gradient(transparent 9px, #5a5a5a 9px, #5a5a5a 40px, transparent 40px) 1; }
.tab.no-line { border-image: none; }
.fav { width: 24px; height: 24px; margin-right: 14px; }
.tab-title { width: 152px; font-size: 17.200px; letter-spacing: -.450px; line-height: 28px; margin-top: -2px; -webkit-mask-image: linear-gradient(90deg, #000 78%, rgba(0,0,0,.15) 96%); mask-image: linear-gradient(90deg, #000 78%, rgba(0,0,0,.15) 96%); }
.tab-title.full { -webkit-mask-image: none; mask-image: none; letter-spacing: 0; }
.tab-x { width: 13px; height: 13px; margin-left: 3px; }
.tab-active { background: #3b3b3b; border-image: none; border-radius: 10px 10px 0 0; }
.newtab { width: 64px; display: flex; align-items: center; justify-content: center; border-left: 2px solid transparent; border-image: linear-gradient(transparent 9px, #5a5a5a 9px, #5a5a5a 40px, transparent 40px) 1; }
.newtab svg { width: 22px; height: 22px; }
.winctl { margin-left: auto; display: flex; align-items: center; gap: 53px; padding-right: 25px; }
.winctl svg { width: 16px; height: 16px; }

/* address row */
.addressrow { display: flex; height: 57px; align-items: center; }
.nav { display: flex; padding-left: 26px; gap: 40px; width: 213px; }
.nav svg { width: 26px; height: 26px; }
.omnibox { width: 1162px; height: 45px; border-radius: 23px; background: #2b2b2b; display: flex; align-items: center; padding-left: 27px; }
.lock { width: 24px; height: 24px; margin-right: 23px; }
.url { width: 841px; color: #969696; font-size: 20px; letter-spacing: -.120px; margin-top: -2px; }
.url b { color: #fff; font-weight: 400; }
.omni-icons { display: flex; gap: 36px; padding-left: 18px; }
.omni-icons svg { width: 24px; height: 24px; }
.dim { color: #949494; }
.tool.ext { width: 24px; height: 24px; margin: 0 24px 0 31px; }
.vsep { width: 1px; height: 24px; background: #606060; }
.tools { display: flex; align-items: center; padding-left: 23px; gap: 42.300px; }
.tools svg { width: 24px; height: 24px; }
.tools svg:nth-child(5) { width: 28px; height: 26px; margin-left: -1px; margin-right: -3px; }
.tools svg.copilot { width: 36px; height: 39px; margin-left: -10px; }

/* bookmarks */
.bookmarks { display: flex; height: 47px; margin-bottom: 4px; align-items: center; color: #fff; font-size: 17.200px; letter-spacing: -.200px; }
.bm { display: flex; align-items: center; gap: 9px; }
.bm > span:last-child { margin-top: -2px; }
.bmi { width: 24px; height: 24px; }
.bm1 { padding-left: 15px; width: 149px; }
.bm2 { width: 127px; }
.bm3 { width: 230px; }
.bm4 { width: 133px; }
.bm5 { width: 126px; }
.stv { width: 22px; height: 21px; border-bottom: 3px solid #6d7383; font-size: 14px; line-height: 20px; color: #28286e; letter-spacing: -1px; }
.other { margin-left: auto; border-left: 1px solid #606060; padding: 0 18px 0 22px; height: 24px; }

/* azure page */
.page { margin: 0 5px 7px 3px; height: 963px; background: #fff; border-radius: 12px; overflow: hidden; display: flex; flex-direction: column; }
.azbar { height: 40px; background: #0078d7; display: flex; align-items: center; color: #fff; flex: none; }
.burger { width: 14px; height: 12px; margin-left: 17px; }
.brand { margin-left: 37px; width: 626px; font-size: 14.300px; font-weight: 600; letter-spacing: -.060px; }
.azsearch { width: 520px; height: 26px; border-radius: 2px; background: #b3d6f3; color: #1b5c94; display: flex; align-items: center; padding-left: 8px; gap: 9px; font-size: 12.300px; }
.azsearch svg { width: 13px; height: 13px; }
.azcopilot { width: 90px; height: 26px; margin-left: 5px; background: #fff; border-radius: 3px; color: #243a6b; display: flex; align-items: center; padding-left: 12px; gap: 6px; font-weight: 600; font-size: 12.400px; }
.azcopilot svg { width: 16px; height: 16px; }
.azicons { display: flex; gap: 24px; margin-left: 191px; }
.azicons svg { width: 16px; height: 16px; }
.azicons .w { color: #fff; }
.user { margin-left: 32px; width: 166px; }
.u1 { font-size: 13.200px; line-height: 18px; }
.u2 { font-size: 9.600px; font-weight: 700; line-height: 14px; letter-spacing: -.220px; }
.avatar { width: 28px; height: 28px; }

.crumbs { display: flex; height: 36px; align-items: center; padding-left: 20px; color: #0078d4; flex: none; font-size: 13.200px; }
.crumbs svg { width: 8px; height: 12px; margin: 0 7px; }
.c2 { letter-spacing: .040px; }
.titlebar { display: flex; height: 58px; padding: 0 28px 0 25px; flex: none; }
.bulb { width: 18px; height: 27px; margin-top: 10px; }
.titles { margin-left: 15px; flex: 1; }
.h { display: flex; align-items: center; height: 30px; font-size: 22.900px; color: #292827; }
.h b { font-weight: 600; width: 149px; letter-spacing: -.240px; }
.h span { width: 120px; letter-spacing: -.500px; }
.hstar { width: 15px; height: 15px; color: #323130; }
.hdots { width: 14px; height: 4px; margin-left: 17px; }
.sub { color: #605e5c; font-size: 11.350px; line-height: 16px; margin-top: 2px; }
.close { width: 13px; height: 13px; margin-top: 9px; }

.body { display: flex; flex: 1; min-height: 0; }
.side { width: 265px; display: flex; flex-direction: column; }
.side-head { height: 35px; display: flex; align-items: center; padding: 0 0 0 16px; }
.ssearch { width: 187px; height: 25px; border: 1px solid #605e5c; border-radius: 2px; display: flex; align-items: center; gap: 5px; padding-left: 6px; color: #605e5c; }
.ssearch svg { width: 13px; height: 13px; color: #0078d4; }
.updn { width: 7px; height: 10px; margin-left: 12px; }
.dbl { width: 9px; height: 9px; margin-left: 22px; }
.side-body { flex: 1; min-height: 0; display: flex; overflow: hidden; }
.menu { list-style: none; margin: -6px 0 0; padding: 0; width: 242px; }
.menu li { height: 32px; display: flex; align-items: center; padding-left: 44px; gap: 8px; line-height: 17px; }
.menu li svg { width: 16px; height: 16px; }
.menu li span { position: relative; top: 1px; }
.menu li.two { height: 48px; }
.menu li.grp { padding-left: 22px; gap: 10px; }
.menu li.grp svg { width: 12px; height: 12px; }
.menu li.grp span { top: 0; }
.menu li.sel { background: #edebe9; border-left: 2px solid #0078d4; padding-left: 42px; font-weight: 600; }
.scroll { width: 23px; background: #fbfbfb; padding: 12px 0 12px; display: flex; flex-direction: column; align-items: center; }
.scroll svg { width: 14px; height: 12px; }
.gap1 { height: 269px; }
.gap2 { height: 258px; }
.thumb { width: 13px; border-radius: 7px; background: #8b8b8b; flex: 1; margin-bottom: 11px; }
.scroll.right { padding-left: 1px; }

.main { flex: 1; margin-left: 20px; display: flex; flex-direction: column; min-width: 0; }
.cmds { height: 35px; margin-right: 19px; border-bottom: 1px solid #c8c6c4; display: flex; align-items: center; padding-left: 8px; }
.cmds svg { width: 16px; height: 16px; margin-right: 8px; }
.bl { color: #0078d4; }
.k1 { width: 176px; }
.k2 { width: 98px; }
.k3 { width: 59px; }
.k4 { width: 161px; }
.content { flex: 1; min-height: 0; display: flex; overflow: hidden; }
.grid { flex: 1; display: grid; grid-template-columns: 767px 767px; grid-template-rows: 70px 334px 333px; gap: 13px 14px; padding-left: 22px; overflow: hidden; align-content: start; }
.card { border: 1px solid #d2d0ce; background: #fff; box-shadow: 0 3px 12px rgba(0,0,0,.07); display: flex; flex-direction: column; }
.card.short { border-top: 0; }
.card.short .legend { margin-top: -5px; }
.card-head { height: 68px; margin-right: 24px; border-bottom: 1px solid #bebbb8; display: flex; padding-left: 19px; }
.last .card-head { height: 67px; }
.ct { width: 437px; padding-top: 25px; }
.last .ct { padding-top: 24px; }
.ct h3 { margin: 0; display: flex; align-items: center; gap: 5px; font-weight: 400; font-size: 13.300px; line-height: 18px; color: #111; }
.ct h3 svg { width: 9px; height: 9px; }
.ct h4 { margin: 0; font-size: 9.600px; line-height: 15px; font-weight: 700; color: #000; letter-spacing: -.050px; }
.pills { display: flex; height: 24px; margin-top: 27px; border: 1px solid #bebbb8; font-size: 12px; color: #111; width: 225px; }
.pills span { flex: 0 0 39px; text-align: center; line-height: 22px; border-right: 1px solid #bebbb8; }
.pills span:nth-child(1) { flex-basis: 35px; }
.pills span:nth-child(2) { flex-basis: 36px; }
.pills span:nth-child(3) { flex-basis: 38px; }
.pills span:nth-child(6) { flex-basis: 36px; border: 0; }
.pills .on { background: #daeeff; }
.cols { width: 16px; height: 11px; margin: 33px 9px 0 15px; }
.pin { width: 16px; height: 16px; margin-top: 30px; }
.chart { width: 765px; height: 190px; }
.gl { stroke: #c8c8c8; stroke-width: 1; fill: none; }
.yl text, .xl text { font-size: 9.600px; fill: #555; letter-spacing: -.250px; }
.yl text { text-anchor: end; }
.xl text { text-anchor: middle; }
.s { fill: none; stroke-width: 2; stroke-linejoin: round; }
.s.b { stroke: #3355dd; }
.s.r { stroke: #e0707c; }
.s.y { stroke: #b8860b; }
.s.d { stroke-dasharray: 3 3; }
.legend { display: flex; padding-left: 40px; height: 45px; }
.lg { width: 120px; border-left: 5px solid; padding-left: 5px; display: flex; flex-direction: column; }
.lg.b { border-color: #3355dd; }
.lg.r { border-color: #e0707c; }
.lg.y { border-color: #b8860b; }
.lg b { font-size: 9.600px; line-height: 12px; margin-top: 1px; font-weight: 600; color: #222; letter-spacing: -.200px; }
.lg i { font-style: normal; font-size: 9.500px; line-height: 11px; color: #444; letter-spacing: -.500px; }
.lg p { margin: 0; font-size: 19.200px; line-height: 24px; font-weight: 600; color: #222; letter-spacing: -.650px; }
.lg small { font-size: 9.800px; margin-left: 3px; letter-spacing: -.250px; }

/* taskbar */
.taskbar { height: 70px; display: flex; justify-content: space-between; background: linear-gradient(90deg, #1a2236 0, #1a2236 42%, #14283a 50%, #132a37 60%, #142a38 84%, #16263f 90%, #202036 94%, #2c1c2c 100%); border-top: 1px solid #3d4654; }
.apps { display: flex; padding-left: 16px; }
.app { width: 60px; margin-right: 6.100px; position: relative; display: flex; justify-content: center; padding-top: 17px; }
.app svg { width: 35px; height: 35px; }
.app:nth-child(3) svg { width: 36px; }
.app.run::after { content: ""; position: absolute; bottom: 6px; left: 26px; width: 8px; height: 4px; border-radius: 2px; background: #9299a5; }
.app.wide::after { left: 19px; width: 22px; }
.app.cur { background: #253244; border: 1px solid #3a4656; border-radius: 7px; height: 60px; margin-top: 4px; padding-top: 12px; }
.app.cur::after { bottom: 0; left: 21px; width: 17px; background: #4cc2ff; }
.app em { position: absolute; top: 19px; left: 0; right: 0; text-align: center; color: #fff; font: 700 22px/30px "Open Sans", sans-serif; }
.tray { display: flex; align-items: center; padding-right: 30px; }
.t1 { width: 16px; height: 10px; margin-right: 40px; }
.t2 { width: 17px; height: 25px; margin-right: 27px; margin-left: -8px; }
.t3 { width: 24px; height: 20px; margin-right: 12px; }
.t4 { width: 24px; height: 20px; margin-right: 12px; }
.t5 { width: 24px; height: 20px; margin-right: 24px; }
.t6 { width: 20px; height: 24px; }
.clock { width: 76px; text-align: right; color: #fff; font-size: 17px; line-height: 24px; letter-spacing: -.150px; margin: -2px 12px 0 0; }
```
